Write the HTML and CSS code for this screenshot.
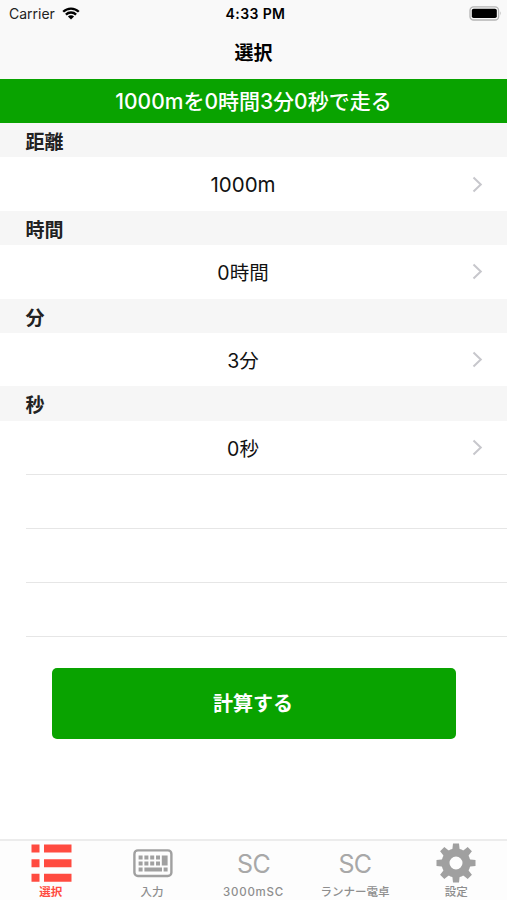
FILE: index.html
```html
<!DOCTYPE html>
<html lang="ja">
<head>
    <meta charset="UTF-8">
    <meta name="viewport" content="width=device-width, initial-scale=1.0">
    <title>選択</title>
    <link rel="stylesheet" href="styles.css">
</head>
<body>
    <div class="app">
        <!-- Status bar and title -->
        <header class="header">
            <div class="status-bar">
                <div class="carrier">
                    <span>Carrier</span>
                    <svg class="wifi" viewBox="0 0 18 13" width="18" height="13">
                        <path d="M1.2 4.8a11 11 0 0 1 15.6 0M3.9 7.6a7.2 7.2 0 0 1 10.2 0" fill="none" stroke="#000" stroke-width="2.3"/>
                        <path d="M9 12.6L5.9 9.5a4.4 4.4 0 0 1 6.2 0z"/>
                    </svg>
                </div>
                <div class="clock">4:33 PM</div>
                <div class="battery-wrap">
                    <svg class="battery" viewBox="0 0 33 15" width="33" height="15">
                        <rect x="1" y="0.8" width="28.6" height="13.2" rx="3.6" fill="none" stroke="#b4b4b4" stroke-width="1.3"/>
                        <rect x="2.8" y="2.8" width="25" height="9.2" rx="1.8"/>
                        <path d="M31 5.3q1.5 2.1 0 4.2z" fill="#a9a9a9"/>
                    </svg>
                </div>
            </div>
            <h1 class="title">選択</h1>
        </header>

        <div class="summary">1000mを0時間3分0秒で走る</div>

        <!-- Settings list -->
        <main class="list">
            <h2 class="section">距離</h2>
            <div class="row">
                <span class="value distance">1000m</span>
                <svg class="chevron" viewBox="0 0 11 17" width="11" height="17"><path d="M1.5 1.5l7.3 7-7.3 7"/></svg>
            </div>
            <h2 class="section">時間</h2>
            <div class="row">
                <span class="value">0時間</span>
                <svg class="chevron" viewBox="0 0 11 17" width="11" height="17"><path d="M1.5 1.5l7.3 7-7.3 7"/></svg>
            </div>
            <h2 class="section">分</h2>
            <div class="row">
                <span class="value">3分</span>
                <svg class="chevron" viewBox="0 0 11 17" width="11" height="17"><path d="M1.5 1.5l7.3 7-7.3 7"/></svg>
            </div>
            <h2 class="section">秒</h2>
            <div class="row">
                <span class="value">0秒</span>
                <svg class="chevron" viewBox="0 0 11 17" width="11" height="17"><path d="M1.5 1.5l7.3 7-7.3 7"/></svg>
            </div>
            <div class="blank"></div>
            <div class="blank"></div>
            <div class="blank"></div>
            <div class="blank end"></div>
        </main>

        <button class="calculate">計算する</button>

        <!-- Tab bar -->
        <nav class="tabs">
            <a class="tab active">
                <svg class="icon" viewBox="0 0 42 44" width="42" height="44">
                    <path d="M1.5 3.5h8v8h-8zM14 3.5h27.5v8H14zM1.5 18.2h8v8h-8zM14 18.2h27.5v8H14zM1.5 32.8h8v8h-8zM14 32.8h27.5v8H14z"/>
                </svg>
                <span>選択</span>
            </a>
            <a class="tab">
                <svg class="icon" viewBox="0 0 42 44" width="42" height="44">
                    <rect x="3.4" y="9.4" width="37" height="25.6" rx="3.5" fill="none" stroke="#a0a0a0" stroke-width="2.4"/>
                    <path d="M7.6 14.6h4v4h-4zM13.4 14.6h4v4h-4zM19.2 14.6h4v4h-4zM25 14.6h4v4h-4zM7.600 20.400h4v4h-4zM13.400 20.400h4v4h-4zM19.200 20.400h4v4h-4zM25 20.400h4v4h-4zM30.800 14.600h5.800v9.800h-5.800zM7.600 26.400h4v4h-4zM13.400 26.400h17.600v4H13.400zM32.600 26.400h4v4h-4z"/>
                </svg>
                <span>入力</span>
            </a>
            <a class="tab">
                <div class="icon sc">SC</div>
                <span class="latin">3000mSC</span>
            </a>
            <a class="tab">
                <div class="icon sc">SC</div>
                <span>ランナー電卓</span>
            </a>
            <a class="tab">
                <svg class="icon" viewBox="0 0 42 44" width="42" height="44">
                    <circle cx="21" cy="22" r="10.5" fill="none" stroke="#a0a0a0" stroke-width="8"/>
                    <path d="M18 2.5h6l.8 7.500h-7.600zM18 41.500h6l.8-7.500h-7.600zM1.500 19v6l7.500.8v-7.600zM40.500 19v6l-7.500.8v-7.600z"/>
                    <path transform="rotate(45 21 22)" d="M18 2.5h6l.8 7.500h-7.600zM18 41.500h6l.8-7.500h-7.600zM1.500 19v6l7.500.8v-7.600zM40.500 19v6l-7.500.8v-7.600z"/>
                </svg>
                <span>設定</span>
            </a>
        </nav>
    </div>
</body>
</html>
```
FILE: styles.css
```css
body {
    margin: 0;
    background-color: #fff;
    color: #222;
    font-family: Inter, "Noto Sans CJK JP", sans-serif;
}

.app {
    display: flex;
    flex-direction: column;
    height: 900px;
    overflow: hidden;
}

.header {
    height: 79px;
    background-color: #f9f9f9;
    color: #000;
}

.status-bar {
    display: grid;
    grid-template-columns: 1fr auto 1fr;
    align-items: center;
    height: 27px;
    padding: 0 5px 0 9px;
    font-size: 14px;
}

.carrier {
    display: flex;
    align-items: center;
    gap: 7px;
    color: #222;
}

.clock {
    font-weight: 600;
    letter-spacing: 0.4px;
}

.battery-wrap {
    display: flex;
    justify-content: flex-end;
}

.title {
    margin: 0;
    font-size: 19px;
    font-weight: 700;
    line-height: 54px;
    text-align: center;
}

.summary {
    height: 44px;
    background-color: #09a300;
    color: #fff;
    font-size: 21px;
    font-weight: 500;
    line-height: 46px;
    text-align: center;
}

.section {
    box-sizing: border-box;
    height: 34.4px;
    margin: 0;
    padding-left: 25.5px;
    background-color: #f6f6f6;
    font-size: 19px;
    font-weight: 700;
    line-height: 40px;
}

.row {
    display: flex;
    align-items: center;
    height: 53.4px;
    padding: 0 24px 0 25px;
}

.value {
    flex: 1;
    padding-right: 11px;
    color: #111;
    font-size: 19.5px;
    text-align: center;
}

.distance {
    font-size: 20.5px;
}

.chevron {
    fill: none;
    stroke: #c7c7cc;
    stroke-width: 2;
}

.blank {
    box-sizing: border-box;
    height: 54px;
    margin-left: 26px;
    border-top: 1px solid #e6e6e6;
}

.end {
    height: 1px;
}

.calculate {
    width: 404px;
    height: 71px;
    margin: 31px 0 0 52px;
    padding: 0 2px 2px 0;
    border: none;
    border-radius: 5px;
    background-color: #09a300;
    color: #fff;
    font-family: inherit;
    font-size: 20px;
    font-weight: 700;
}

.tabs {
    display: flex;
    box-sizing: border-box;
    height: 61px;
    margin-top: auto;
    border-top: 2px solid #ececec;
    background-color: #fdfdfd;
}

.tab {
    display: flex;
    flex: 1 0 0;
    flex-direction: column;
    align-items: center;
    color: #8e8e8e;
    fill: #a0a0a0;
    font-size: 11.5px;
    font-weight: 500;
    line-height: 14px;
    white-space: nowrap;
}

.icon {
    flex: none;
    height: 44px;
}

.sc {
    color: #a8a8a8;
    font-size: 25px;
    font-weight: 400;
    letter-spacing: -0.7px;
    line-height: 46px;
}

.latin {
    letter-spacing: 0.8px;
}

.active {
    color: #ff4b40;
    fill: #ff4b40;
    font-weight: 700;
}
```
